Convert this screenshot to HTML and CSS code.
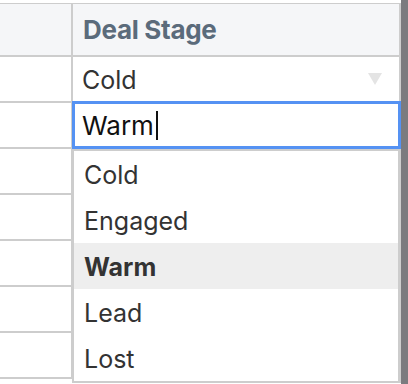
FILE: index.html
```html
<!DOCTYPE html>
<html>
<head>
<meta charset="utf-8">
<link rel="stylesheet" href="styles.css">
</head>
<body>
<div class="page">
  <div class="sheet">
    <div class="grid">
      <div class="cell head"></div>
      <div class="cell head col2"><span class="title">Deal Stage</span></div>
      <div class="cell"></div>
      <div class="cell col2 value"><span>Cold</span>
        <svg class="arrow" width="14" height="12" viewBox="0 0 14 12"><polygon points="0,0 14,0 7,12" fill="#e4e4e4"/></svg>
      </div>
      <div class="cell"></div><div class="cell col2"></div>
      <div class="cell"></div><div class="cell col2"></div>
      <div class="cell"></div><div class="cell col2"></div>
      <div class="cell"></div><div class="cell col2"></div>
      <div class="cell"></div><div class="cell col2"></div>
      <div class="cell"></div><div class="cell col2"></div>
    </div>
    <div class="editor">
      <div class="input">Warm<span class="caret"></span></div>
      <ul class="list">
        <li>Cold</li>
        <li>Engaged</li>
        <li class="active">Warm</li>
        <li>Lead</li>
        <li>Lost</li>
      </ul>
    </div>
  </div>
  <div class="scrollbar"></div>
</div>
</body>
</html>
```
FILE: styles.css
```css
html, body {
  margin: 0;
  padding: 0;
  background: #ffffff;
}
body {
  font-family: Inter, "Noto Sans", "Liberation Sans", sans-serif;
  font-size: 25px;
  color: #333333;
  overflow: hidden;
}
.page {
  display: flex;
  width: 408px;
  height: 384px;
  overflow: hidden;
}
.sheet {
  position: relative;
  width: 401px;
  padding-top: 3px;
}
.grid {
  display: grid;
  grid-template-columns: 73px 328px;
  grid-template-rows: 53px;
  grid-auto-rows: 46px;
  border-top: 1px solid #cdcdcd;
}
.cell {
  box-sizing: border-box;
  border-right: 2px solid #cdcdcd;
  border-bottom: 2px solid #cdcdcd;
  display: flex;
  align-items: center;
}
.cell.head {
  background: #f5f6f8;
}
.col2 {
  padding-left: 9px;
}
.title {
  font-size: 26px;
  font-weight: 700;
  color: #5b6b7b;
  padding-left: 1px;
  letter-spacing: -0.3px;
}
.value {
  justify-content: space-between;
  padding-right: 17px;
}
.value span {
  margin-top: 2px;
}
.arrow {
  display: block;
}
.editor {
  position: absolute;
  left: 72px;
  top: 101px;
  width: 329px;
}
.input {
  box-sizing: border-box;
  height: 48px;
  border: 3px solid #5592f3;
  background: #ffffff;
  padding-left: 7px;
  display: flex;
  align-items: center;
  color: #111111;
  font-size: 26px;
}
.caret {
  display: inline-block;
  width: 2px;
  height: 29px;
  background: #111111;
  margin-left: 2px;
}
.list {
  list-style: none;
  margin: 0;
  padding: 0;
  background: #ffffff;
  border: 2px solid #cdcdcd;
  border-right-width: 3px;
  box-sizing: border-box;
  width: 329px;
}
.list li {
  height: 46px;
  display: flex;
  align-items: center;
  padding-left: 10px;
  padding-top: 1px;
  box-sizing: border-box;
}
.list li.active {
  background: #eeeeee;
  font-weight: 700;
}
.scrollbar {
  width: 7px;
  height: 384px;
  background: #7b7b7f;
}
```
